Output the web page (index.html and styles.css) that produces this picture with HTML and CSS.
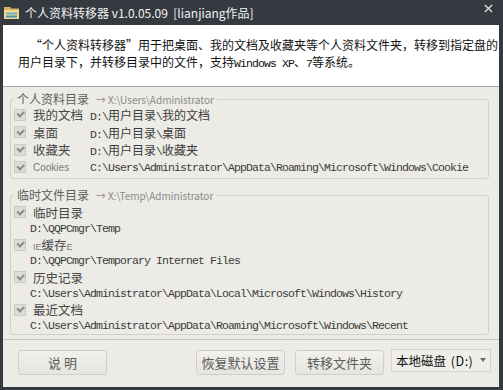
FILE: index.html
```html
<!DOCTYPE html>
<html lang="zh-CN">

<head>
    <meta charset="UTF-8">
    <title>个人资料转移器</title>
    <link rel="stylesheet" href="styles.css">
</head>

<body>
    <div class="window">
        <div class="titlebar">
            <svg class="app-icon" viewBox="0 0 17 17">
                <path d="M1 3h6l1.5 1.5H16V15H1z" fill="#d9b458"/>
                <path d="M1 6h15v9H1z" fill="#f2d98a"/>
                <path d="M3 8.5h11v2H3z" fill="#6fb0c8"/>
                <path d="M3 11.5h11v2H3z" fill="#4f93b3"/>
            </svg>
            <span class="title">个人资料转移器 v1.0.05.09&nbsp;&nbsp;[lianjiang作品]</span>
            <svg class="close" viewBox="0 0 10 10">
                <path d="M1 1L9 9M9 1L1 9" stroke="#d6d8da" stroke-width="1.6"/>
            </svg>
        </div>

        <div class="client">
            <div class="intro">
                <p>“个人资料转移器”用于把桌面、我的文档及收藏夹等个人资料文件夹，转移到指定盘的<br>用户目录下，并转移目录中的文件，支持<span class="mono">Windows XP</span>、<span class="mono">7</span>等系统。</p>
            </div>

            <fieldset class="group">
                <legend>个人资料目录 <small>→ X:\Users\Administrator</small></legend>
                <div class="row">
                    <span class="check"></span>
                    <span class="label">我的文档</span>
                    <span class="path">D:\<span class="cjk">用户目录</span>\<span class="cjk">我的文档</span></span>
                </div>
                <div class="row">
                    <span class="check"></span>
                    <span class="label">桌面</span>
                    <span class="path">D:\<span class="cjk">用户目录</span>\<span class="cjk">桌面</span></span>
                </div>
                <div class="row">
                    <span class="check"></span>
                    <span class="label">收藏夹</span>
                    <span class="path">D:\<span class="cjk">用户目录</span>\<span class="cjk">收藏夹</span></span>
                </div>
                <div class="row">
                    <span class="check"></span>
                    <span class="label small">Cookies</span>
                    <span class="path">C:\Users\Administrator\AppData\Roaming\Microsoft\Windows\Cookie</span>
                </div>
            </fieldset>

            <fieldset class="group temp">
                <legend>临时文件目录 <small>→ X:\Temp\Administrator</small></legend>
                <div class="item">
                    <div class="row head">
                        <span class="check"></span>
                        <span class="label">临时目录</span>
                    </div>
                    <div class="path sub">D:\QQPCmgr\Temp</div>
                </div>
                <div class="item">
                    <div class="row head">
                        <span class="check"></span>
                        <span class="label"><span class="ie">IE</span>缓存<span class="ie">E</span></span>
                    </div>
                    <div class="path sub">D:\QQPCmgr\Temporary Internet Files</div>
                </div>
                <div class="item">
                    <div class="row head">
                        <span class="check"></span>
                        <span class="label">历史记录</span>
                    </div>
                    <div class="path sub">C:\Users\Administrator\AppData\Local\Microsoft\Windows\History</div>
                </div>
                <div class="item">
                    <div class="row head">
                        <span class="check"></span>
                        <span class="label">最近文档</span>
                    </div>
                    <div class="path sub">C:\Users\Administrator\AppData\Roaming\Microsoft\Windows\Recent</div>
                </div>
            </fieldset>

            <div class="footer">
                <button class="btn help">说&nbsp;明</button>
                <div class="spacer"></div>
                <button class="btn">恢复默认设置</button>
                <button class="btn move">转移文件夹</button>
                <div class="select">
                    <span>本地磁盘 <span class="drive">(D:)</span></span>
                    <span class="arrow"></span>
                </div>
            </div>
        </div>
    </div>
</body>

</html>
```

FILE: styles.css
```css
body {
    margin: 0;
    background: #353a40;
    font-family: "Noto Sans CJK SC", sans-serif;
}

.window {
    width: 503px;
    height: 390px;
    display: flex;
    flex-direction: column;
}

/* 标题栏 */
.titlebar {
    height: 25px;
    display: flex;
    align-items: center;
    padding-left: 3px;
    color: #f2f2f2;
    font-size: 12px;
}

.app-icon {
    width: 17px;
    height: 17px;
    margin-right: 5px;
}

.title {
    flex: 1;
    white-space: nowrap;
}

.close {
    width: 9px;
    height: 9px;
    align-self: flex-start;
    margin: 4px 10px 0 0;
}

.client {
    flex: 1;
    margin: 0 4px 3px 3px;
    background: #ecebe6;
    display: flex;
    flex-direction: column;
}

/* 说明文字 */
.intro {
    height: 61px;
    background: #ffffff;
    border-bottom: 1px solid #a9a9a9;
}

.intro p {
    margin: 0;
    padding: 11px 0 0 15px;
    font-size: 12px;
    line-height: 17px;
    color: #111;
    text-indent: 12px;
    white-space: nowrap;
}

.mono,
.path {
    font-family: "Liberation Mono", "Noto Sans CJK SC", monospace;
    font-size: 11.5px;
    letter-spacing: -0.9px;
}

.cjk {
    font-family: "Noto Sans CJK SC", sans-serif;
    font-size: 12px;
    letter-spacing: 0;
}

/* 分组框 */
.group {
    margin: 6px 10px 0 7px;
    padding: 0 0 2px 3px;
    min-width: 0;
    border: 1px solid #d2d0cb;
    border-radius: 3px;
}

.group legend {
    padding: 0 3px;
    font-size: 12px;
    line-height: 12px;
    color: #5e5e5e;
}

.group legend small {
    margin-left: 4px;
    font-size: 10px;
    color: #8a8a8a;
}

.group.temp {
    margin-top: 10px;
    padding-top: 1.5px;
    padding-bottom: 0;
}

.row {
    height: 17.5px;
    display: flex;
    align-items: center;
}

.check {
    position: relative;
    width: 12px;
    height: 12px;
    box-sizing: border-box;
    border: 1px solid #cbc9c4;
    background: #dfddd8;
    margin-right: 7px;
}

.check::after {
    content: "";
    position: absolute;
    left: 2px;
    top: 1.5px;
    width: 5px;
    height: 2.5px;
    border-left: 2px solid #8c8c8c;
    border-bottom: 2px solid #8c8c8c;
    transform: rotate(-45deg);
}

.label {
    width: 57px;
    font-size: 12.5px;
    color: #474747;
    white-space: nowrap;
}

.label.small {
    font-family: "Liberation Sans", sans-serif;
    font-size: 10px;
    color: #7a7a7a;
}

.label .ie {
    font-family: "Liberation Sans", sans-serif;
    font-size: 9px;
    color: #7a7a7a;
}

.path {
    color: #3c3c3c;
    white-space: nowrap;
}

.row.head {
    height: 17px;
}

.path.sub {
    height: 15.5px;
    line-height: 15.5px;
    padding-left: 16px;
}

/* 底部按钮 */
.footer {
    flex: 1;
    margin-top: 4px;
    border-top: 1px solid #c9c7c2;
    padding: 10px 8px 0 15px;
    display: flex;
    align-items: flex-start;
}

.spacer {
    flex: 1;
}

.btn {
    width: 89px;
    height: 25px;
    padding: 0;
    border: 1px solid #d0cec9;
    border-radius: 3px;
    background: linear-gradient(to bottom, #f1f0ec, #e7e5e0);
    font-family: "Noto Sans CJK SC", sans-serif;
    font-size: 13px;
    color: #5c5c5c;
}

.btn.move {
    margin-left: 10px;
}

.select {
    width: 100px;
    height: 23px;
    margin: -1px 0 0 7px;
    box-sizing: border-box;
    border: 1px solid #d6d4cf;
    background: #efeeea;
    display: flex;
    align-items: center;
    padding: 0 4px 0 4px;
    font-size: 12.5px;
    color: #111;
    white-space: nowrap;
}

.select span:first-child {
    flex: 1;
}

.drive {
    margin-left: 2px;
    letter-spacing: 0.5px;
}

.arrow {
    width: 0;
    height: 0;
    border-left: 3.5px solid transparent;
    border-right: 3.5px solid transparent;
    border-top: 4px solid #6a6a6a;
}
```
